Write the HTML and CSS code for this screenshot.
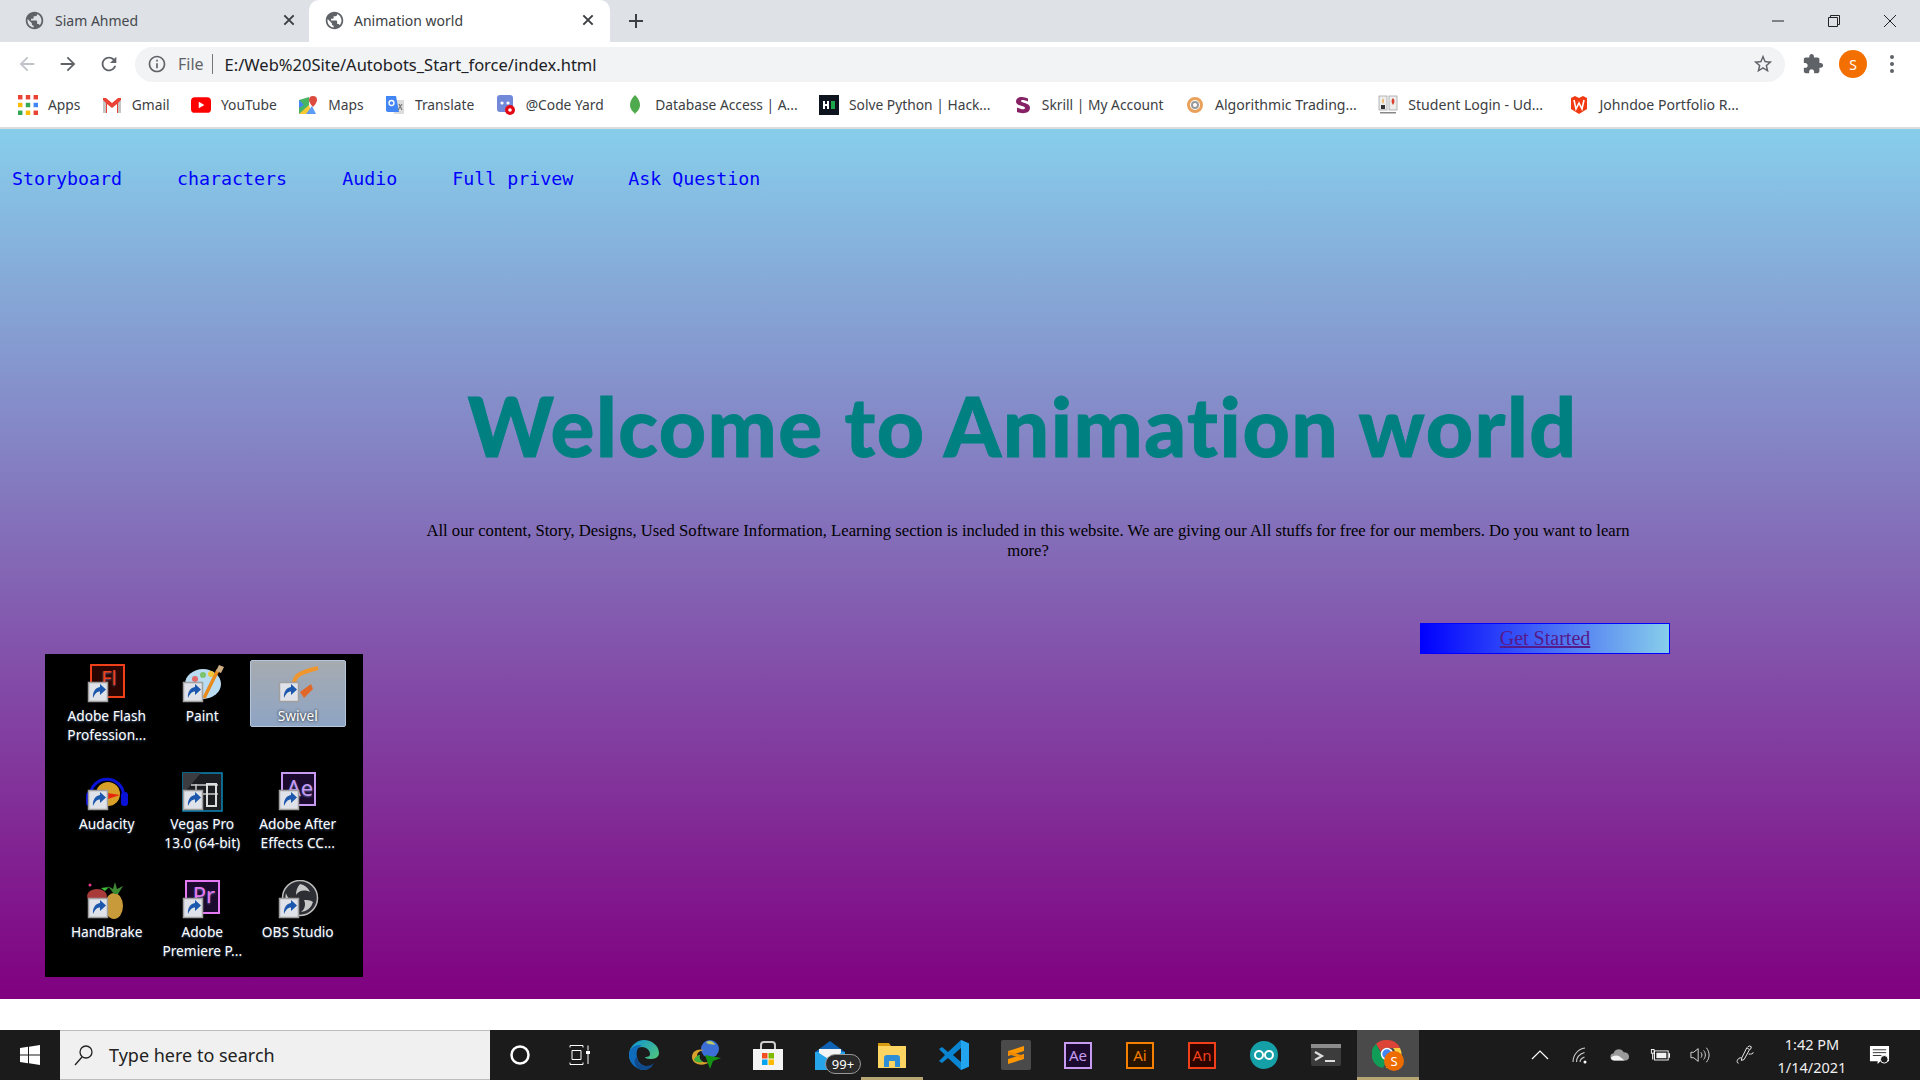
FILE: index.html
```html
<!DOCTYPE html>
<html lang="en">
<head>
<meta charset="utf-8">
<title>Animation world</title>
<link rel="stylesheet" href="styles.css">
</head>
<body>
<svg class="defs" width="0" height="0" aria-hidden="true">
  <defs>
    <symbol id="globe" viewBox="0 0 24 24"><path fill="#5f6368" d="M12 2C6.48 2 2 6.48 2 12s4.48 10 10 10 10-4.48 10-10S17.52 2 12 2zm-1 17.93c-3.95-.49-7-3.85-7-7.93 0-.62.08-1.21.21-1.79L9 15v1c0 1.1.9 2 2 2v1.93zm6.9-2.54c-.26-.81-1-1.39-1.9-1.39h-1v-3c0-.55-.45-1-1-1H8v-2h2c.55 0 1-.45 1-1V7h2c1.1 0 2-.9 2-2v-.41c2.93 1.19 5 4.06 5 7.41 0 2.08-.8 3.97-2.1 5.39z"/></symbol>
    <symbol id="x" viewBox="0 0 12 12"><path d="M2 2l8 8M10 2l-8 8" stroke="#3c4043" stroke-width="1.7" fill="none"/></symbol>
    <symbol id="arrow" viewBox="0 0 48 42"><rect x="5.500" y="18.500" width="19" height="19" fill="#dfe2e8" stroke="#a0a0a0" stroke-width="1.500"/><path d="M10 34c-.5-6 2-10 7-11v-3l6 5.500-6 5.500v-3.500c-3 0-5 2-7 6.500z" fill="#1b57ad"/></symbol>
  </defs>
</svg>

<div class="window">
  <header class="chrome">
    <div class="tabstrip">
      <div class="tab">
        <svg class="fav"><use href="#globe"/></svg>
        <span class="tab-title">Siam Ahmed</span>
        <svg class="tab-x"><use href="#x"/></svg>
      </div>
      <div class="tab tab-active">
        <svg class="fav"><use href="#globe"/></svg>
        <span class="tab-title">Animation world</span>
        <svg class="tab-x"><use href="#x"/></svg>
      </div>
      <svg class="newtab" viewBox="0 0 16 16"><path d="M8 1v14M1 8h14" stroke="#3c4043" stroke-width="2"/></svg>
      <div class="winctl">
        <svg viewBox="0 0 14 14"><path d="M1 7h12" stroke="#222" fill="none"/></svg>
        <svg viewBox="0 0 14 14"><path d="M1.500 3.500h9v9h-9zM3.500 3.500v-2h9v9h-2" stroke="#222" fill="none"/></svg>
        <svg viewBox="0 0 14 14"><path d="M1 1l12 12M13 1L1 13" stroke="#222" fill="none"/></svg>
      </div>
    </div>

    <div class="toolbar">
      <svg class="nav-ic" viewBox="0 0 24 24"><path fill="#c0c3c7" d="M20 11H7.830l5.590-5.590L12 4l-8 8 8 8 1.410-1.410L7.830 13H20v-2z"/></svg>
      <svg class="nav-ic" viewBox="0 0 24 24"><path fill="#5f6368" d="M12 4l-1.410 1.410L16.170 11H4v2h12.170l-5.580 5.590L12 20l8-8z"/></svg>
      <svg class="nav-ic" viewBox="0 0 24 24"><path fill="#5f6368" d="M17.650 6.350C16.200 4.900 14.210 4 12 4c-4.420 0-7.990 3.580-7.990 8s3.570 8 7.990 8c3.730 0 6.840-2.550 7.730-6h-2.080c-.82 2.330-3.040 4-5.650 4-3.310 0-6-2.690-6-6s2.690-6 6-6c1.660 0 3.140.69 4.220 1.780L13 11h7V4l-2.350 2.350z"/></svg>
      <div class="omnibox">
        <svg class="info" viewBox="0 0 24 24"><path fill="#5f6368" d="M11 7h2v2h-2zm0 4h2v6h-2zm1-9C6.480 2 2 6.480 2 12s4.480 10 10 10 10-4.480 10-10S17.520 2 12 2zm0 18c-4.410 0-8-3.590-8-8s3.590-8 8-8 8 3.590 8 8-3.590 8-8 8z"/></svg>
        <span class="scheme">File</span>
        <span class="url">E:/Web%20Site/Autobots_Start_force/index.html</span>
        <svg class="star" viewBox="0 0 24 24"><path fill="#5f6368" d="M22 9.240l-7.190-.62L12 2 9.190 8.630 2 9.240l5.460 4.730L5.820 21 12 17.270 18.180 21l-1.630-7.030L22 9.240zM12 15.400l-3.760 2.270 1-4.280-3.320-2.880 4.380-.38L12 6.100l1.710 4.040 4.380.38-3.320 2.880 1 4.280L12 15.400z"/></svg>
      </div>
      <svg class="puzzle" viewBox="0 0 24 24"><path fill="#5f6368" d="M20.500 11H19V7c0-1.100-.9-2-2-2h-4V3.500C13 2.120 11.880 1 10.500 1S8 2.120 8 3.500V5H4c-1.100 0-1.990.9-1.990 2v3.800H3.500c1.490 0 2.700 1.210 2.700 2.700s-1.210 2.700-2.700 2.700H2V20c0 1.100.9 2 2 2h3.800v-1.500c0-1.490 1.210-2.700 2.700-2.700 1.490 0 2.700 1.210 2.700 2.700V22H17c1.100 0 2-.9 2-2v-4h1.500c1.380 0 2.500-1.120 2.500-2.500S21.880 11 20.500 11z"/></svg>
      <span class="avatar">S</span>
      <svg class="dots" viewBox="0 0 6 20"><circle cx="3" cy="3" r="2" fill="#5f6368"/><circle cx="3" cy="10" r="2" fill="#5f6368"/><circle cx="3" cy="17" r="2" fill="#5f6368"/></svg>
    </div>

    <div class="bookmarks">
      <a class="bm bm-apps"><svg class="bm-ic" viewBox="0 0 18 18"><rect x="0" y="0" width="4" height="4" fill="#ea4335"/><rect x="7" y="0" width="4" height="4" fill="#ea4335"/><rect x="14" y="0" width="4" height="4" fill="#ea4335"/><rect x="0" y="7" width="4" height="4" fill="#fbbc05"/><rect x="7" y="7" width="4" height="4" fill="#34a853"/><rect x="14" y="7" width="4" height="4" fill="#4285f4"/><rect x="0" y="14" width="4" height="4" fill="#34a853"/><rect x="7" y="14" width="4" height="4" fill="#fbbc05"/><rect x="14" y="14" width="4" height="4" fill="#ea4335"/></svg><span>Apps</span></a>
      <a class="bm bm-gmail"><svg class="bm-ic" viewBox="0 0 20 18"><path d="M1 2h3l6 5 6-5h3v15h-4V8l-5 4-5-4v9H1z" fill="#ea4335"/><path d="M1 17V4l3 3v10z" fill="#c5c5c5"/><path d="M19 17V4l-3 3v10z" fill="#c5c5c5"/></svg><span>Gmail</span></a>
      <a class="bm bm-yt"><svg class="bm-ic" viewBox="0 0 18 18"><rect x="0" y="2" width="18" height="14" rx="3.500" fill="#f00"/><path d="M7 6l5 3-5 3z" fill="#fff"/></svg><span>YouTube</span></a>
      <a class="bm bm-maps"><svg class="bm-ic" viewBox="0 0 20 20"><path d="M1 5l10-3v16l-10 1z" fill="#48b564"/><path d="M1 19l10-9 3 9z" fill="#fcc934"/><path d="M1 13l5-3-5-5z" fill="#4285f4"/><path d="M8 19l6-8 4 8z" fill="#5b9cf6"/><path d="M15 1a4 4 0 0 1 4 4c0 3-4 7-4 7s-4-4-4-7a4 4 0 0 1 4-4z" fill="#dd4b3e"/></svg><span>Maps</span></a>
      <a class="bm bm-tr"><svg class="bm-ic" viewBox="0 0 20 20"><rect x="9" y="5" width="10" height="14" fill="#dcdcdc"/><path d="M1 1h10l3 16H3a2 2 0 0 1-2-2z" fill="#4285f4"/><circle cx="6.500" cy="8" r="2.500" fill="none" stroke="#fff" stroke-width="1.300"/><path d="M14 9l3 6M17 9l-4 6" stroke="#777" stroke-width="1.200"/></svg><span>Translate</span></a>
      <a class="bm bm-code"><svg class="bm-ic" viewBox="0 0 20 20"><rect x="1" y="0" width="16" height="17" rx="3" fill="#7289da"/><circle cx="6" cy="8" r="1.600" fill="#fff"/><circle cx="12" cy="8" r="1.600" fill="#fff"/><circle cx="14" cy="15" r="5" fill="#e30613"/><circle cx="14" cy="15" r="1.800" fill="#fff"/></svg><span>@Code Yard</span></a>
      <a class="bm bm-db"><svg class="bm-ic" viewBox="0 0 14 20"><path d="M7 0c3 3 5 6 5 10s-3 7-4.500 8L7 20l-.5-2C5 17 2 14 2 10s2-7 5-10z" fill="#4fa94d"/></svg><span>Database Access | A...</span></a>
      <a class="bm bm-hk"><svg class="bm-ic" viewBox="0 0 20 20"><rect width="20" height="20" fill="#0e141e"/><rect x="4" y="6" width="2" height="8" fill="#fff"/><rect x="8" y="6" width="2" height="8" fill="#fff"/><rect x="6" y="9" width="2" height="2" fill="#fff"/><rect x="12" y="6" width="4" height="8" fill="#1ba94c"/></svg><span>Solve Python | Hack...</span></a>
      <a class="bm bm-sk"><svg class="bm-ic" viewBox="0 0 16 20"><path d="M14 3.500C12 2.500 10 2 8 2 4 2 2 4 2 6.500c0 5 9 3.500 9 6.500 0 1.500-3 2-8-.5V17c5 2 13 2 13-4.500 0-5-9-4-9-6.500 0-1.500 3-1.500 7 .5z" fill="#862165"/></svg><span>Skrill | My Account</span></a>
      <a class="bm bm-al"><svg class="bm-ic" viewBox="0 0 16 20"><circle cx="8" cy="10" r="6.500" fill="none" stroke="#e9a05b" stroke-width="3"/><circle cx="8" cy="10" r="3" fill="none" stroke="#999" stroke-width="2"/></svg><span>Algorithmic Trading...</span></a>
      <a class="bm bm-st"><svg class="bm-ic" viewBox="0 0 20 20"><rect x="1" y="1" width="8" height="14" fill="#eee" stroke="#999" stroke-width=".7"/><rect x="11" y="1" width="8" height="14" fill="#eee" stroke="#999" stroke-width=".7"/><path d="M5 3c1 2 1 4 0 6-1-2-1-4 0-6z" fill="#e9a23b"/><path d="M15 3c2 2 2 4 0 7-2-3-2-5 0-7z" fill="#d9402f"/><rect x="3" y="10" width="4" height="4" fill="#333"/><rect x="2" y="17" width="16" height="1.500" fill="#888"/></svg><span>Student Login - Ud...</span></a>
      <a class="bm bm-jd"><svg class="bm-ic" viewBox="0 0 18 20"><path d="M1 3l4-2 4 2 4-2 4 2v11l-8 5-8-5z" fill="#f23a12"/><path d="M4 5l2 9 3-6 3 6 2-9" stroke="#fff" stroke-width="1.600" fill="none"/></svg><span>Johndoe Portfolio R...</span></a>
    </div>
  </header>

  <main class="page">
    <nav class="site-nav">
      <a>Storyboard</a>
      <a>characters</a>
      <a>Audio</a>
      <a>Full privew</a>
      <a>Ask Question</a>
    </nav>
    <h1 class="headline">Welcome to Animation world</h1>
    <p class="lead">All our content, Story, Designs, Used Software Information, Learning section is included in this website. We are giving our All stuffs for free for our members. Do you want to learn more?</p>
    <div class="cta"><a href="#" class="cta-link">Get Started</a></div>

    <div class="desktop">
      <div class="dicon">
        <svg viewBox="0 0 48 42"><rect x="8" y="1" width="33" height="32" fill="#2a0500" stroke="#f0401a" stroke-width="2"/><text class="ic-t" x="26" y="21" fill="#f0401a" font-size="20">Fl</text><use href="#arrow" width="48" height="42"/></svg>
        <span>Adobe Flash<br>Profession...</span>
      </div>
      <div class="dicon">
        <svg viewBox="0 0 48 42"><ellipse cx="25" cy="20" rx="18" ry="15" fill="#b9dcf2"/><circle cx="25" cy="11" r="3" fill="#7cc36b"/><circle cx="33" cy="10" r="3" fill="#f2c53c"/><circle cx="17" cy="15" r="3" fill="#e26a6a"/><path d="M26 34L40 6" stroke="#e88a1e" stroke-width="3.500"/><path d="M38 7l3-6 5 2-3 6z" fill="#cfae82"/><use href="#arrow" width="48" height="42"/></svg>
        <span>Paint</span>
      </div>
      <div class="dicon dicon-sel">
        <svg viewBox="0 0 48 42"><path d="M20 19c1-7 4-10 24-15" stroke="#f0962e" stroke-width="4" fill="none"/><path d="M26 28l11-8 2 5-9 9z" fill="#e2682a"/><use href="#arrow" width="48" height="42"/></svg>
        <span>Swivel</span>
      </div>
      <div class="dicon">
        <svg viewBox="0 0 48 42"><path d="M7 26C7 1 41 1 41 26" stroke="#0a12d8" stroke-width="3" fill="none"/><rect x="3" y="20" width="7" height="14" rx="3" fill="#0a12d8"/><rect x="38" y="20" width="7" height="14" rx="3" fill="#0a12d8"/><ellipse cx="25" cy="22" rx="12" ry="12" fill="#d8a028"/><path d="M14 25l10-4 13 2-12 4z" fill="#e8250c"/><use href="#arrow" width="48" height="42"/></svg>
        <span>Audacity</span>
      </div>
      <div class="dicon">
        <svg viewBox="0 0 48 42"><rect x="5" y="1" width="39" height="38" fill="#1b1d20" stroke="#0c88b8" stroke-width="1.500"/><path d="M5 1h18L5 22z" fill="#3a3c40"/><path d="M13 13h27M13 22h27M18 12v20M29 12v10" stroke="#ccc" stroke-width="1.500" fill="none"/><rect x="29" y="12" width="9" height="22" fill="none" stroke="#ddd" stroke-width="2"/><use href="#arrow" width="48" height="42"/></svg>
        <span>Vegas Pro<br>13.0 (64-bit)</span>
      </div>
      <div class="dicon">
        <svg viewBox="0 0 48 42"><rect x="8" y="1" width="33" height="32" fill="#1c0a2e" stroke="#c79bf2" stroke-width="2"/><text class="ic-t" x="26" y="24" fill="#c79bf2" font-size="22">Ae</text><use href="#arrow" width="48" height="42"/></svg>
        <span>Adobe After<br>Effects CC...</span>
      </div>
      <div class="dicon">
        <svg viewBox="0 0 48 42"><ellipse cx="31" cy="26" rx="9" ry="13" fill="#c99a3a"/><path d="M31 14l-6-8 5 3 2-7 2 7 6-3-5 8z" fill="#3d8a33"/><ellipse cx="14" cy="16" rx="10" ry="7" fill="#a83a3a"/><circle cx="7" cy="5" r="1.500" fill="#e8388a"/><path d="M18 8l8-1-4 4z" fill="#3bbf3b"/><use href="#arrow" width="48" height="42"/></svg>
        <span>HandBrake</span>
      </div>
      <div class="dicon">
        <svg viewBox="0 0 48 42"><rect x="8" y="1" width="33" height="32" fill="#1c0a2e" stroke="#e579f2" stroke-width="2"/><text class="ic-t" x="26" y="23" fill="#e579f2" font-size="22">Pr</text><use href="#arrow" width="48" height="42"/></svg>
        <span>Adobe<br>Premiere P...</span>
      </div>
      <div class="dicon">
        <svg viewBox="0 0 48 42"><circle cx="26" cy="18" r="17.500" fill="#2c2e33" stroke="#bbb" stroke-width="1.500"/><path d="M26 4a14 14 0 0 1 10 8c-6-3-12-1-14 3 0-4 1-8 4-11zM39 22a14 14 0 0 1-12 10c4-3 5-8 3-12 3 0 6 0 9 2zM14 25a14 14 0 0 1-2-12c1 5 5 8 10 8-2 3-5 4-8 4z" fill="#c8c8c8"/><use href="#arrow" width="48" height="42"/></svg>
        <span>OBS Studio</span>
      </div>
    </div>
  </main>

  <div class="gap"></div>

  <footer class="taskbar">
    <div class="start"><svg viewBox="0 0 20 20"><path fill="#fff" d="M0 3l8-1.200v7.700H0zM9 1.700L20 0v9.500H9zM0 10.500h8v7.700L0 17zM9 10.500h11V20L9 18.300z"/></svg></div>
    <div class="search">
      <svg viewBox="0 0 20 22"><circle cx="12" cy="8" r="6" fill="none" stroke="#222" stroke-width="1.300"/><path d="M8 13L1 21" stroke="#222" stroke-width="1.300"/></svg>
      <span>Type here to search</span>
    </div>
    <div class="tasks">
      <div class="task"><svg class="s20" viewBox="0 0 20 20"><circle cx="10" cy="10" r="8.500" fill="none" stroke="#fff" stroke-width="2.500"/></svg></div>
      <div class="task task-view"><svg class="s22" viewBox="0 0 22 20"><path d="M1 .5h13M1 19.500h13M3 5.500h9v9H3zM1 .5v2M14 .5v2M1 19.500v-2M14 19.500v-2M19 .5v5M19 9v10" stroke="#fff" fill="none"/><rect x="17" y="6" width="4" height="3" fill="#fff"/></svg></div>
      <div class="task"><svg class="s30" viewBox="0 0 30 30"><defs><linearGradient id="edg" x1="0" y1="0" x2="1" y2="1"><stop offset="0" stop-color="#0c93d6"/><stop offset="1" stop-color="#5fd06b"/></linearGradient></defs><path d="M15 0c8 0 15 6 15 13 0 5-5 6-9 6-3 0-5-1-5-2 4 0 5-1 5-3 0-4-4-7-8-7C7 7 3 12 3 16c0 3 1 7 3 10C2 23 0 19 0 15 0 7 7 0 15 0z" fill="url(#edg)"/><path d="M0 15c0-6 5-10 10-10 2 0 3 .5 3 .5C8 7 7 12 8 17c1 7 8 11 15 9-2 2-5 4-8 4C7 30 0 23 0 15z" fill="#0f6cbd"/><path d="M8 17c0 5 4 9 9 9 3 0 6-1 8-3-2 4-6 7-10 7-5 0-8-3-9-6-1-3 0-6 2-7z" fill="#114a8b"/></svg></div>
      <div class="task"><svg class="s30" viewBox="0 0 30 30"><circle cx="19" cy="9" r="9" fill="#3b6fd6"/><path d="M15 2c3-2 8-1 9 3-4-1-7 0-9-3z" fill="#b8c96a"/><path d="M1 17c0-6 6-9 12-7-5 1-7 3-7 6 0 5 6 7 12 6-5 5-17 3-17-5z" fill="#d9a12c"/><path d="M3 20c1-3 3-5 6-5-1 2 0 5 3 7-4 1-8 0-9-2z" fill="#3fae3f"/><path d="M14 15l16 3-8 3-3 8z" fill="#149414"/></svg></div>
      <div class="task"><svg class="s30" viewBox="0 0 30 30"><path d="M8 11V5a3 3 0 0 1 3-3h8a3 3 0 0 1 3 3v6" fill="none" stroke="#ccc" stroke-width="2"/><rect y="9" width="30" height="21" fill="#f4f4f4"/><rect x="9" y="13" width="5.500" height="5.500" fill="#f25022"/><rect x="15.500" y="13" width="5.500" height="5.500" fill="#7fba00"/><rect x="9" y="19.500" width="5.500" height="5.500" fill="#00a4ef"/><rect x="15.500" y="19.500" width="5.500" height="5.500" fill="#ffb900"/></svg></div>
      <div class="task task-mail">
        <svg class="s30" viewBox="0 0 30 30"><path d="M0 12L15 1l15 11z" fill="#0f62b4"/><rect y="12" width="30" height="18" fill="#27a5ea"/><path d="M4 9h22v4L15 20 4 13z" fill="#f4f4f4"/></svg>
        <span class="badge">99+</span>
      </div>
      <div class="task task-run"><svg class="s30" viewBox="0 0 30 30"><path d="M1 3h11l2 3h15v4H1z" fill="#d59a10"/><rect x="1" y="6" width="28" height="22" fill="#fcd462"/><path d="M7 27v-9a3 3 0 0 1 3-3h10a3 3 0 0 1 3 3v9h-5v-6h-6v6z" fill="#2d8ed6"/></svg></div>
      <div class="task"><svg class="s30" viewBox="0 0 30 30"><path d="M22 0l8 3.500v23L22 30 9 18l-6 5-3-2 6-6-6-6 3-2 6 5z" fill="#0a85d1"/><path d="M22 0l8 3.500v23L22 30z" fill="#23a4ee"/><path d="M22 8l-8 7 8 7z" fill="#1b1b1b"/></svg></div>
      <div class="task"><svg class="s30" viewBox="0 0 30 30"><rect width="30" height="30" rx="2" fill="#4a4a4a"/><path d="M23 6v5L7 16v-5zM23 14v5L7 24v-5z" fill="#ff9800"/><path d="M7 11l16 5v3L7 14z" fill="#f28b00"/></svg></div>
      <div class="task"><span class="ad ad-ae">Ae</span></div>
      <div class="task"><span class="ad ad-ai">Ai</span></div>
      <div class="task"><span class="ad ad-an">An</span></div>
      <div class="task"><svg class="s28" viewBox="0 0 28 28"><circle cx="14" cy="14" r="14" fill="#15a0a8"/><circle cx="9" cy="14" r="4" fill="none" stroke="#fff" stroke-width="2"/><circle cx="19" cy="14" r="4" fill="none" stroke="#fff" stroke-width="2"/></svg></div>
      <div class="task"><svg class="s30" viewBox="0 0 30 22"><rect width="30" height="22" rx="2" fill="#3c3c3c"/><rect width="30" height="4" fill="#8c8c8c"/><path d="M4 8l7 4-7 4" stroke="#ddd" stroke-width="2.200" fill="none"/><rect x="14" y="16" width="10" height="2" fill="#ddd"/></svg></div>
      <div class="task task-chrome">
        <svg class="s32" viewBox="0 0 32 32"><path d="M15 1a14 14 0 0 1 13 8H15a6 6 0 0 0-6 4L4 5a14 14 0 0 1 11-4z" fill="#db4437"/><path d="M4 5l6 11a6 6 0 0 0 5 5l-4 8A14 14 0 0 1 4 5z" fill="#0f9d58"/><path d="M28 9a14 14 0 0 1-14 20l7-11a6 6 0 0 0 0-9z" fill="#ffcd40"/><circle cx="15" cy="15" r="5.500" fill="#4285f4" stroke="#fff" stroke-width="1.500"/><circle cx="22" cy="22" r="10" fill="#ed6c02"/><text class="ic-t" x="22" y="27" fill="#fff" font-size="13">S</text></svg>
      </div>
    </div>
    <div class="tray">
      <svg class="tray-ic" viewBox="0 0 20 20"><path d="M2 14l8-8 8 8" stroke="#fff" stroke-width="1.200" fill="none"/></svg>
      <svg class="tray-ic" viewBox="0 0 20 20"><path d="M3 17C3 10 8 4 15 3M6.500 17c0-5 3-8 8-9.500M10 17c0-2 2-4 4.500-5" stroke="#ccc" stroke-width="1.100" fill="none"/><circle cx="15" cy="17" r="1.500" fill="#fff"/></svg>
      <svg class="tray-ic" viewBox="0 0 22 20"><path d="M5 16a4 4 0 0 1-1-8c1-5 9-6 11-1 4 0 6 2 6 5s-2 4-4 4z" fill="#9a9a9a"/><path d="M1 13c3-3 7-3 10-1l5 4H5a4 4 0 0 1-4-3z" fill="#f2f2f2"/></svg>
      <svg class="tray-ic" viewBox="0 0 22 20"><rect x="5" y="5.500" width="15" height="10" fill="#1b1b1b" stroke="#fff"/><rect x="7" y="7.500" width="11" height="6" fill="#f2f2f2"/><rect x="20.500" y="8" width="1.500" height="5" fill="#fff"/><path d="M3 8v7" stroke="#fff" stroke-width="1.200"/><rect x="1.500" y="4" width="3" height="4" fill="none" stroke="#fff"/></svg>
      <svg class="tray-ic" viewBox="0 0 22 20"><path d="M1 7h3l5-4v14l-5-4H1zM12 7c1.500 2 1.500 4 0 6M15 5c2.500 3 2.500 7 0 10M18 2c4 5 4 11 0 16" stroke="#e6e6e6" fill="none"/></svg>
      <svg class="tray-ic tray-pen" viewBox="0 0 22 22"><path d="M13 3l3 2-6 11-3 1 .5-3zM14 2l2-1 2 1-1 3" stroke="#e6e6e6" fill="none" stroke-width="1.100"/><path d="M7 14c-5 0-6 6-3 6M15 10c3 0 5 0 5-2" stroke="#e6e6e6" fill="none" stroke-width="1.100"/></svg>
      <div class="clock"><span>1:42 PM</span><span>1/14/2021</span></div>
      <svg class="notif" viewBox="0 0 22 22"><path d="M1 1h20v16h-9l-3 3v-3H1z" fill="#fff"/><path d="M4 5h14M4 8h14M4 11h9" stroke="#333"/><circle cx="16" cy="15" r="4" fill="#1b1b1b" stroke="#fff"/></svg>
    </div>
  </footer>
</div>
</body>
</html>
```

FILE: styles.css
```css
* { box-sizing: border-box; }
html, body { margin: 0; height: 100%; }
body { font-family: "Noto Sans", sans-serif; overflow: hidden; background: #fff; }
.defs { position: absolute; }
.window { display: flex; flex-direction: column; height: 1080px; }

/* browser chrome */
.chrome { height: 129px; flex: none; border-bottom: 2px solid #dcdcdc; background: #fff; }
.tabstrip { display: flex; align-items: center; height: 42px; background: #dee1e6; }
.tab { width: 309px; height: 42px; display: flex; align-items: center; padding: 0 13px 2px 24px; color: #45484d; font-size: 14px; }
.tab-active { width: 301px; background: #fff; border-radius: 10px 10px 0 0; color: #3c4043; padding: 0 15px 2px 15px; }
.fav { width: 21px; height: 21px; flex: none; }
.tab-title { margin-left: 10px; flex: 1; }
.tab-active .tab-title { margin-left: 9px; }
.tab-x { width: 14px; height: 14px; flex: none; }
.newtab { width: 16px; height: 16px; margin-left: 18px; }
.winctl { margin-left: auto; display: flex; gap: 42px; padding-right: 23px; }
.winctl svg { width: 14px; height: 14px; }

.toolbar { height: 44px; display: flex; align-items: center; padding: 0 0 0 16px; background: #fff; }
.nav-ic { width: 22px; height: 22px; margin-right: 19px; flex: none; }
.nav-ic:nth-of-type(3) { margin-right: 0; }
.omnibox { margin-left: 15px; width: 1650px; height: 35px; border-radius: 18px; background: #f1f3f4; display: flex; align-items: center; padding: 0 11px 0 12px; flex: none; }
.info { width: 20px; height: 20px; flex: none; }
.scheme { margin-left: 11px; padding-right: 8px; border-right: 1px solid #777; color: #5f6368; font-size: 16px; line-height: 20px; }
.url { margin-left: 12px; color: #202124; font-size: 16.500px; }
.star { width: 22px; height: 22px; margin-left: auto; }
.puzzle { width: 22px; height: 22px; margin-left: 17px; flex: none; }
.avatar { width: 28px; height: 28px; margin-left: 15px; border-radius: 50%; background: #f36f00; color: #fff; font-size: 14px; display: flex; align-items: center; justify-content: center; flex: none; }
.dots { width: 6px; height: 20px; margin-left: 22px; flex: none; }

.bookmarks { height: 41px; display: flex; align-items: center; padding: 0 0 4px 18px; background: #fff; }
.bm { display: flex; align-items: center; gap: 10px; font-size: 13.800px; color: #3c4043; white-space: nowrap; margin-right: 21.400px; }
.bm-al, .bm-st, .bm-jd { font-size: 14.100px; }
.bm-jd { margin-left: 5px; }
.bm-ic { width: 20px; height: 20px; flex: none; }

/* page */
.page { height: 870px; flex: none; overflow: hidden; background: linear-gradient(to bottom, skyblue, purple); }
.site-nav { display: flex; gap: 55px; padding: 39px 0 0 12px; font-family: "DejaVu Sans Mono", monospace; font-size: 18.300px; line-height: 22px; color: #0000ff; }
.headline { margin: 0 0 0 125px; padding-top: 187px; text-align: center; font-family: Lato, sans-serif; font-weight: 900; font-size: 82px; letter-spacing: 1.500px; line-height: 96px; color: #008080; white-space: nowrap; font-variant-ligatures: none; -webkit-text-stroke: .8px #008080; }
.lead { width: 1240px; margin: 48px 0 0 408px; text-align: center; font-family: "Liberation Serif", serif; font-size: 16.650px; line-height: 20px; color: #000; }
.cta { width: 250px; height: 31px; margin: 62px 0 0 1420px; border: 1px solid #0000ff; background: linear-gradient(to right, blue, skyblue); text-align: center; font-family: "Liberation Serif", serif; font-size: 20px; line-height: 29px; }
.cta-link { color: #551a8b; text-decoration: underline; }

/* desktop picture */
.desktop { width: 318px; height: 323px; margin-left: 45px; padding: 6px 0 0 14px; background: #000; display: grid; grid-template-columns: repeat(3, 95.500px); grid-auto-rows: 108px; }
.dicon { display: flex; flex-direction: column; align-items: center; padding-top: 4px; height: 67px; border-radius: 2px; text-align: center; color: #fff; font-size: 13.700px; line-height: 19px; white-space: nowrap; text-shadow: 0 1px 2px rgba(120,160,220,.6); }
.dicon svg { width: 48px; height: 42px; flex: none; }
.dicon-sel { background: linear-gradient(to bottom, #a6abb0, #8ea4c4); border: 1px solid #b4c6dc; padding-top: 3px; text-shadow: 0 0 3px #000; }
.ic-t { font-family: "Noto Sans", sans-serif; text-anchor: middle; }

/* gap under page */
.gap { height: 31px; flex: none; background: #fff; }

/* taskbar */
.taskbar { height: 50px; flex: none; display: flex; align-items: stretch; background: #1b1b1b; }
.start { width: 60px; display: flex; align-items: center; justify-content: center; }
.start svg { width: 20px; height: 20px; }
.search { width: 430px; display: flex; align-items: center; gap: 15px; padding-left: 14px; background: #f0f0f0; border-top: 1px solid #bdbdbd; border-bottom: 1px solid #bdbdbd; color: #222; font-size: 18px; }
.search svg { width: 20px; height: 22px; flex: none; }
.tasks { display: flex; margin-left: -1px; }
.task { position: relative; width: 62px; display: flex; align-items: center; justify-content: center; }
.task-view svg { margin-right: 4px; }
.s20 { width: 20px; height: 20px; }
.s22 { width: 22px; height: 20px; }
.s28 { width: 28px; height: 28px; }
.s30 { width: 30px; height: 30px; }
.s32 { width: 32px; height: 32px; }
.badge { position: absolute; left: 26px; top: 24px; width: 36px; height: 20px; border-radius: 10px; border: 1px solid #999; background: #2a2a2a; color: #fff; font-size: 13px; line-height: 18px; text-align: center; }
.task-run::after, .task-chrome::after { content: ""; position: absolute; left: 0; right: 0; bottom: 0; height: 3px; background: #b5a673; }
.task-chrome { background: #4a4a4a; }
.ad { width: 28px; height: 27px; border: 2px solid; display: flex; align-items: center; justify-content: center; font-size: 15px; }
.ad-ae { background: #1c0a2e; border-color: #c79bf2; color: #c79bf2; }
.ad-ai { background: #261300; border-color: #f47f00; color: #f47f00; }
.ad-an { background: #2a0500; border-color: #f0401a; color: #f0401a; }

.tray { margin-left: auto; display: flex; align-items: center; padding-right: 30px; }
.tray-ic { width: 20px; height: 20px; margin: 0 10px; flex: none; }
.tray-pen { margin-left: 15px; }
.clock { width: 94px; display: flex; flex-direction: column; align-items: center; gap: 3px; color: #f0f0f0; font-size: 14.500px; line-height: 20px; }
.notif { width: 21px; height: 21px; margin-left: 10px; }
```
